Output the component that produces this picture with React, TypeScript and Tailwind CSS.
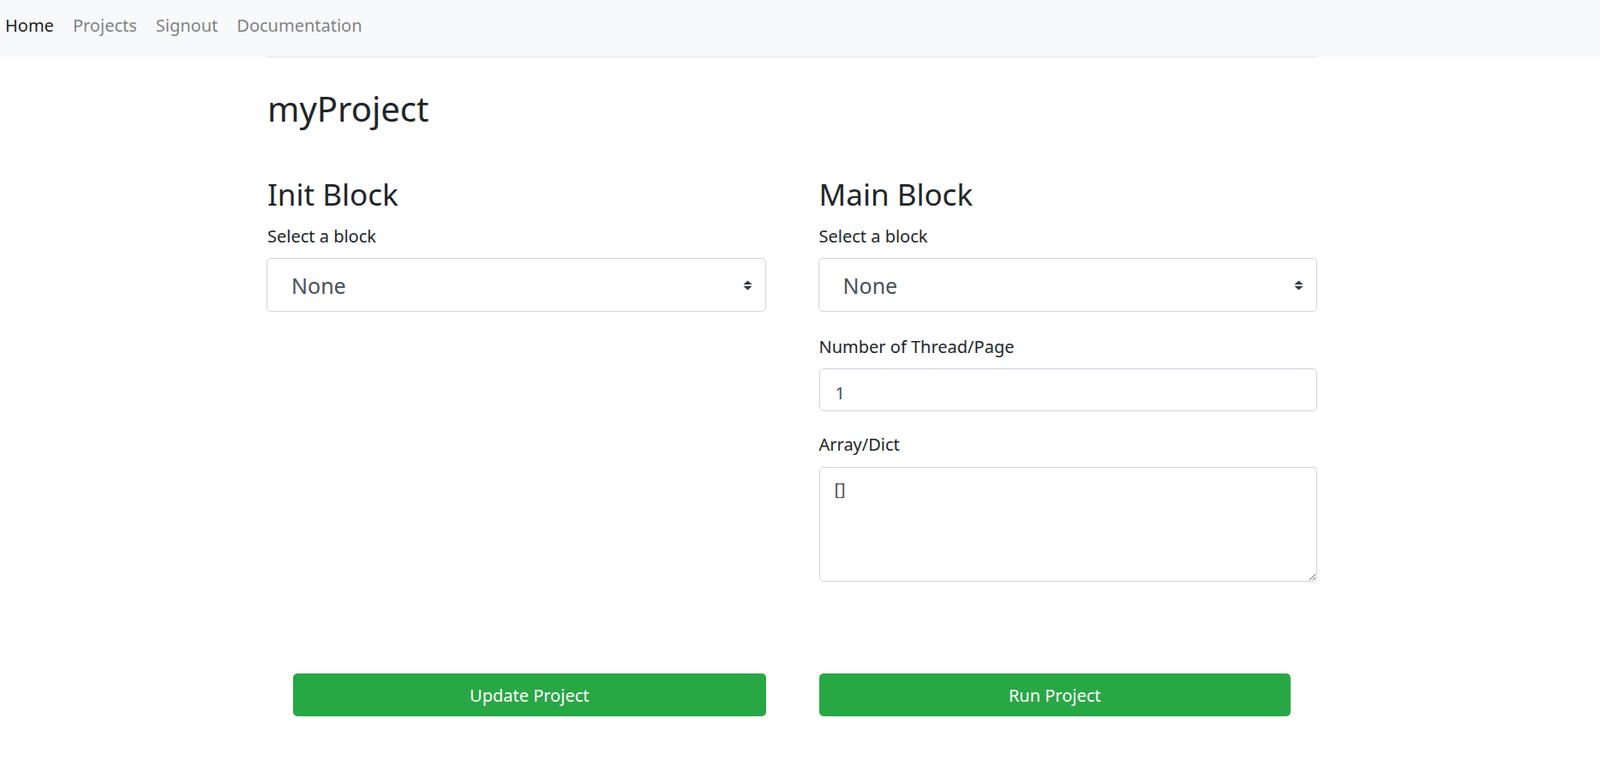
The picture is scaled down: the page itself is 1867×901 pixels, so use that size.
import React from "react";

function Arrow() {
  return (
    <svg
      width="11"
      height="12"
      viewBox="0 0 11 12"
      className="pointer-events-none absolute right-[16px] top-[26px]"
    >
      <path d="M5.5 0.5 L10.5 5 H0.5 Z M0.5 7 H10.5 L5.5 11.5 Z" fill="#343a40" />
    </svg>
  );
}

function BlockSelect() {
  return (
    <div className="relative -ml-[1px] mt-[10px]">
      <select
        defaultValue="none"
        className="block h-[63px] w-full appearance-none rounded-[5px] border border-[#ced4da] bg-white pl-[28px] pt-[3px] text-[25px] text-[#495057] outline-none"
      >
        <option value="none">None</option>
      </select>
      <Arrow />
    </div>
  );
}

export default function App() {
  return (
    <div className="min-h-[901px] bg-white font-['Noto_Sans',sans-serif] text-[#212529]">
      <nav className="flex h-[66px] items-start gap-[22px] bg-[#f8f9fa] pl-[6px] pt-[15px] text-[20px] leading-[30px]">
        <a className="text-black/90">Home</a>
        <a className="text-black/50">Projects</a>
        <a className="text-black/50">Signout</a>
        <a className="text-black/50">Documentation</a>
      </nav>
      <div className="pr-[18px]">
        <div className="mx-auto w-[1225px] border-t border-[#e6e6e6] pb-[60px]">
          <h1 className="mt-[36px] text-[40px] font-normal leading-[48px]">myProject</h1>
          <div className="mt-[55px] grid grid-cols-2 gap-x-[62px]">
            <div>
              <h2 className="text-[35px] font-normal leading-[42px]">Init Block</h2>
              <label className="mt-[13px] block text-[20px] leading-[30px]">Select a block</label>
              <BlockSelect />
            </div>
            <div>
              <h2 className="text-[35px] font-normal leading-[42px]">Main Block</h2>
              <label className="mt-[13px] block text-[20px] leading-[30px]">Select a block</label>
              <BlockSelect />
              <label className="mt-[26px] block text-[20px] leading-[30px]">Number of Thread/Page</label>
              <input
                defaultValue="1"
                className="mt-[10px] block h-[50px] w-full rounded-[5px] border border-[#ced4da] bg-white pl-[18px] pt-[6px] text-[20px] leading-[30px] text-[#495057] outline-none"
              />
              <label className="mt-[24px] block text-[20px] leading-[30px]">Array/Dict</label>
              <textarea
                defaultValue="[]"
                className="mt-[11px] block h-[134px] w-full rounded-[5px] border border-[#ced4da] bg-white pl-[17px] pt-[10px] text-[20px] leading-[30px] text-[#495057] outline-none"
              />
            </div>
          </div>
          <div className="mt-[107px] grid grid-cols-2 gap-x-[62px]">
            <div className="pl-[30px]">
              <button className="h-[50px] w-full rounded-[5px] bg-[#28a745] pt-[2px] text-[20px] leading-[30px] text-white">
                Update Project
              </button>
            </div>
            <div className="pr-[31px]">
              <button className="h-[50px] w-full rounded-[5px] bg-[#28a745] pt-[2px] text-[20px] leading-[30px] text-white">
                Run Project
              </button>
            </div>
          </div>
        </div>
      </div>
    </div>
  );
}
